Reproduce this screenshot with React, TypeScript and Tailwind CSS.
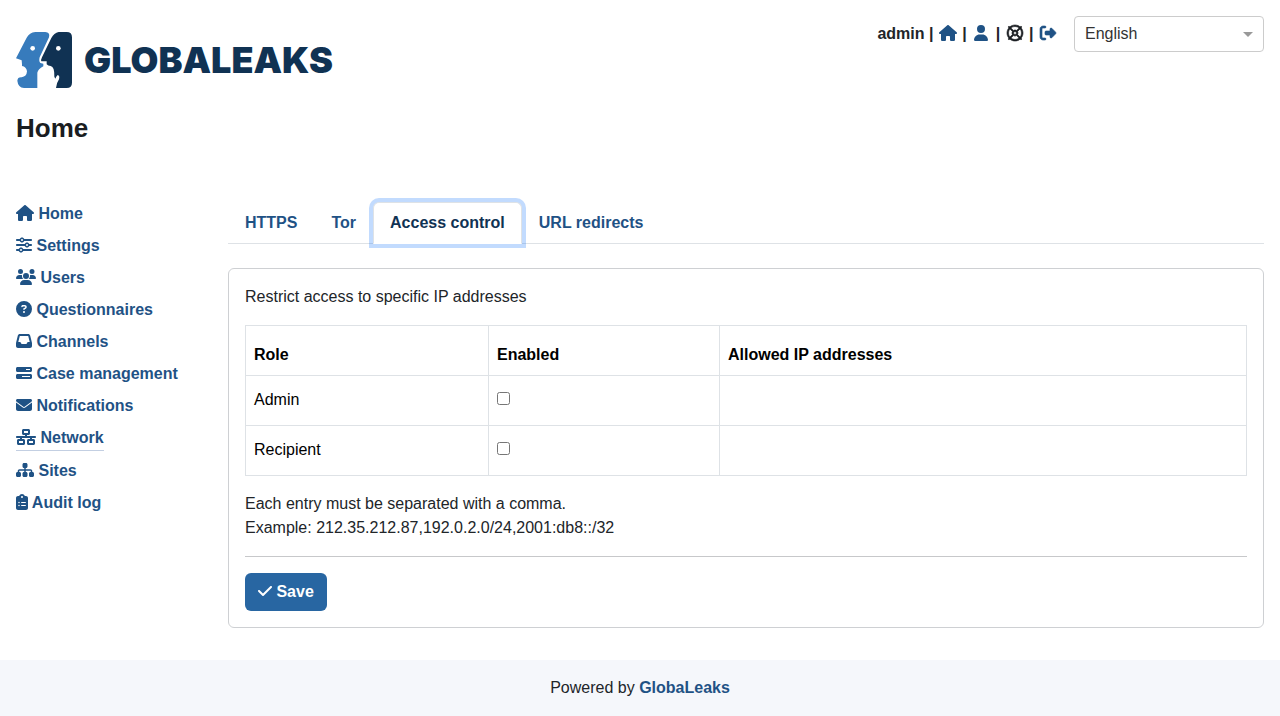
import type { ComponentType, ReactNode } from "react";
import {
  FaBarsProgress,
  FaCheck,
  FaCircleQuestion,
  FaClipboardList,
  FaEnvelope,
  FaHouse,
  FaInbox,
  FaNetworkWired,
  FaRegLifeRing,
  FaRightFromBracket,
  FaSitemap,
  FaSliders,
  FaUser,
  FaUsers,
} from "react-icons/fa6";

type Icon = ComponentType<{ className?: string }>;

const size = {
  xs: "inline-block h-4 w-3 align-[-2px]",
  sm: "inline-block h-4 w-[14px] align-[-2px]",
  md: "inline-block h-4 w-4 align-[-2px]",
  mdBold: "inline-block h-4 w-4 overflow-visible stroke-current stroke-[20px] align-[-2px]",
  lg: "inline-block h-4 w-[18px] align-[-2px]",
  xl: "inline-block h-4 w-5 align-[-2px]",
};

const menu: { label: string; icon: Icon; width: keyof typeof size; active?: boolean }[] = [
  { label: "Home", icon: FaHouse, width: "lg" },
  { label: "Settings", icon: FaSliders, width: "md" },
  { label: "Users", icon: FaUsers, width: "xl" },
  { label: "Questionnaires", icon: FaCircleQuestion, width: "md" },
  { label: "Channels", icon: FaInbox, width: "md" },
  { label: "Case management", icon: FaBarsProgress, width: "md" },
  { label: "Notifications", icon: FaEnvelope, width: "md" },
  { label: "Network", icon: FaNetworkWired, width: "xl", active: true },
  { label: "Sites", icon: FaSitemap, width: "lg" },
  { label: "Audit log", icon: FaClipboardList, width: "xs" },
];

const tabs = ["HTTPS", "Tor", "Access control", "URL redirects"];
const roles = ["Admin", "Recipient"];

function Logo() {
  return (
    <a href="#home" aria-label="GlobaLeaks" className="flex items-center gap-3 text-[#103253]">
      <svg viewBox="0 0 168 168" className="h-14 w-14" aria-hidden="true">
        <path
          fill="#377bbc"
          d="M58 0H88Q103 1 99 16L71 76Q68 88 73 93L82 95V103Q66 112 64 122V168H24Q6 166 4 146Q5 135 17 136Q32 134 33 118Q31 104 18 102V97L17 85L0 79L32 17Q40 2 58 0Z"
        />
        <path
          fill="#103253"
          d="M128 0H152Q168 0 168 16V152Q168 168 152 168H120Q121 154 129 142Q132 130 125 129Q121 132 118 140L115 134Q116 104 104 102Q96 102 92 97V88H76Q74 84 78 76L106 18Q114 3 128 0Z"
        />
        <circle cx="50" cy="49" r="7" fill="#fff" />
        <circle cx="127" cy="49" r="7" fill="#fff" />
      </svg>
      <span className="font-[Inter] text-4xl font-black">GLOBALEAKS</span>
    </a>
  );
}

function HeaderLink({
  icon: Glyph,
  label,
  width,
  dark,
}: {
  icon: Icon;
  label: string;
  width: keyof typeof size;
  dark?: boolean;
}) {
  return (
    <a
      href="#account"
      aria-label={label}
      className={dark ? "inline-block w-5 text-center text-[#1a1d21]" : "inline-block w-5 text-center text-[#1f5285]"}
    >
      <Glyph className={size[width]} />
    </a>
  );
}

function Cell({ children }: { children?: ReactNode }) {
  return <td className="h-[50px] border border-[#dee2e6] px-2 pb-0.5">{children}</td>;
}

export default function App() {
  return (
    <div className="flex min-h-screen flex-col bg-white font-['Liberation_Sans',Arial,sans-serif] text-base text-[#212529]">
      <header className="flex items-start justify-between px-4 pt-4">
        <div>
          <div className="pt-4">
            <Logo />
          </div>
          <h1 className="mt-6 text-[26px] leading-8 font-bold text-[#1a1d21]">Home</h1>
        </div>
        <div className="flex items-center gap-4">
          <div className="font-bold">
            admin | <HeaderLink icon={FaHouse} width="lg" label="Home" /> |{" "}
            <HeaderLink icon={FaUser} width="sm" label="Preferences" /> |{" "}
            <HeaderLink icon={FaRegLifeRing} width="mdBold" label="Support" dark /> |{" "}
            <HeaderLink icon={FaRightFromBracket} width="mdBold" label="Logout" />
          </div>
          <div className="relative">
            <select
              aria-label="Language"
              className="h-9 w-[190px] appearance-none rounded border border-[#ccc] bg-white pl-2.5 text-[#333]"
            >
              <option>English</option>
            </select>
            <span className="pointer-events-none absolute top-4 right-[11px] border-x-5 border-t-5 border-x-transparent border-t-[#999]" />
          </div>
        </div>
      </header>

      <div className="flex grow gap-4 px-4 pt-[53px] pb-8">
        <nav className="w-[196px] shrink-0 pt-px">
          <ul>
            {menu.map(({ label, icon: Glyph, width, active }) => (
              <li key={label} className="flex py-1">
                <a
                  href="#menu"
                  className={
                    active
                      ? "border-b border-[#c3cfe2] font-bold text-[#1f5285]"
                      : "font-bold text-[#1f5285]"
                  }
                >
                  <Glyph className={size[width]} /> {label}
                </a>
              </li>
            ))}
          </ul>
        </nav>

        <main className="min-w-0 grow pt-[5px]">
          <div role="tablist" className="flex border-b border-[#dee2e6]">
            {tabs.map((tab) => {
              const active = tab === "Access control";
              return (
                <button
                  key={tab}
                  type="button"
                  role="tab"
                  aria-selected={active}
                  className={
                    active
                      ? "-mb-px rounded-t-md border border-[#dee2e6] border-b-white bg-white px-4 py-2 font-bold text-[#103253] ring-4 ring-[#0d6efd]/25"
                      : "-mb-px border border-transparent px-4 py-2 font-bold text-[#1f5285]"
                  }
                >
                  {tab}
                </button>
              );
            })}
          </div>

          <section className="mt-6 rounded-md border border-[#ced0d3] p-4">
            <p>Restrict access to specific IP addresses</p>
            <table className="my-4 w-full table-fixed border-collapse text-left text-black">
              <thead>
                <tr>
                  <th className="h-[50px] w-[243px] border border-[#dee2e6] px-2 pb-2 align-bottom">Role</th>
                  <th className="w-[231px] border border-[#dee2e6] px-2 pb-2 align-bottom">Enabled</th>
                  <th className="border border-[#dee2e6] px-2 pb-2 align-bottom">Allowed IP addresses</th>
                </tr>
              </thead>
              <tbody>
                {roles.map((role) => (
                  <tr key={role}>
                    <Cell>{role}</Cell>
                    <Cell>
                      <input type="checkbox" aria-label={`${role} enabled`} className="size-[13px] align-baseline" />
                    </Cell>
                    <Cell />
                  </tr>
                ))}
              </tbody>
            </table>
            <p>Each entry must be separated with a comma.</p>
            <p>Example: 212.35.212.87,192.0.2.0/24,2001:db8::/32</p>
            <hr className="my-4 border-[#c7c8ca]" />
            <button type="button" className="rounded-md bg-[#2866a2] px-[13px] py-[7px] font-bold text-white">
              <FaCheck className={size.sm} /> Save
            </button>
          </section>
        </main>
      </div>

      <footer className="bg-[#f5f7fb] p-4 text-center">
        Powered by{" "}
        <a href="#globaleaks" className="font-bold text-[#1f5285]">
          GlobaLeaks
        </a>
      </footer>
    </div>
  );
}
